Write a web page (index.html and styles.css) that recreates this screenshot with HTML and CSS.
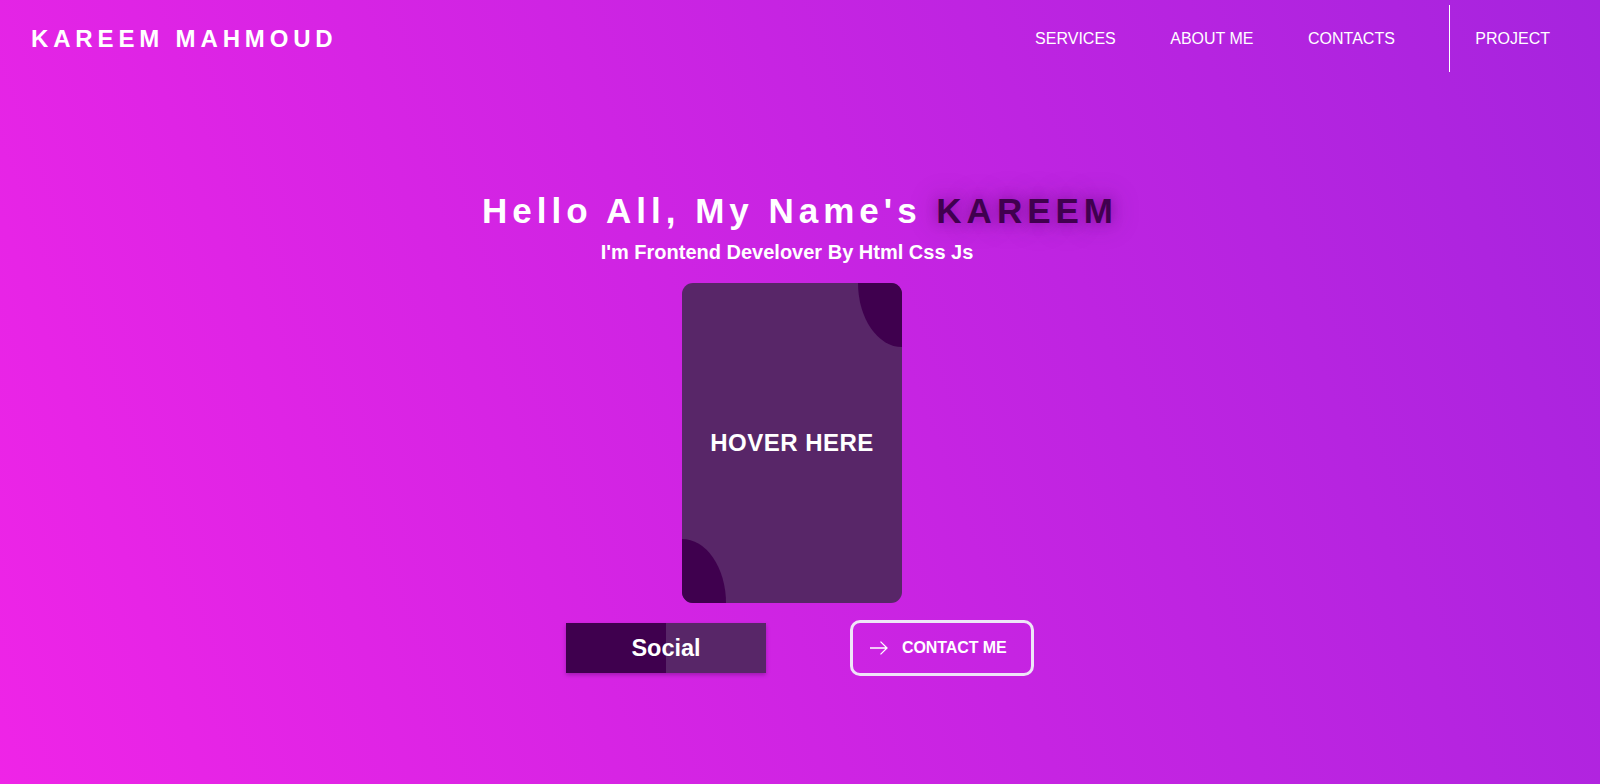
FILE: index.html
```html
<!DOCTYPE html>
<html lang="en">
<head>
<meta charset="utf-8">
<title>Kareem Mahmoud</title>
<link rel="stylesheet" href="styles.css">
</head>
<body>
<header class="header">
  <div class="logo">KAREEM MAHMOUD</div>
  <nav class="nav">
    <a class="nav-link" href="#">SERVICES</a>
    <a class="nav-link" href="#">ABOUT ME</a>
    <a class="nav-link" href="#">CONTACTS</a>
    <a class="nav-link nav-project" href="#">PROJECT</a>
  </nav>
</header>
<main class="hero">
  <h1 class="title">Hello All, My Name's <span class="name">KAREEM</span></h1>
  <p class="subtitle">I'm Frontend Develover By Html Css Js</p>
  <div class="card">
    <span class="card-blob card-blob-top"></span>
    <span class="card-text">HOVER HERE</span>
    <span class="card-blob card-blob-bottom"></span>
  </div>
  <div class="actions">
    <a class="btn-social" href="#">Social</a>
    <a class="btn-contact" href="#">
      <svg class="arrow" width="18" height="14" viewBox="0 0 18 14" aria-hidden="true">
        <path d="M0 7 H17 M10.5 0.6 L17 7 L10.5 13.4" fill="none" stroke="#fff" stroke-width="1.3"/>
      </svg>
      <span>CONTACT ME</span>
    </a>
  </div>
</main>
</body>
</html>
```

FILE: styles.css
```css
* { box-sizing: border-box; }

html, body {
  margin: 0;
  height: 100%;
}

body {
  font-family: "Liberation Sans", Arial, sans-serif;
  color: #fff;
  background: linear-gradient(70deg, #ef24e7 0%, #a624de 100%);
  overflow: hidden;
}

a { color: #fff; text-decoration: none; }

.header {
  height: 77px;
  display: flex;
  align-items: center;
  justify-content: space-between;
  padding: 5px 0 5px 31px;
}

.logo {
  font-size: 24px;
  font-weight: bold;
  letter-spacing: 4.85px;
}

.nav {
  display: flex;
  align-items: center;
  gap: 54.5px;
  height: 67px;
}

.nav-link {
  font-size: 16px;
  line-height: 67px;
}

.nav-project {
  border-left: 1px solid #fff;
  padding-left: 25px;
  padding-right: 50px;
}

.hero {
  display: flex;
  flex-direction: column;
  align-items: center;
  padding-top: 113px;
}

.title {
  margin: 0;
  font-size: 35px;
  line-height: 42px;
  font-weight: bold;
  letter-spacing: 5px;
}

.name {
  color: #40004f;
  text-shadow: 0 0 12px rgba(70, 0, 90, 0.4), 0 0 28px rgba(70, 0, 90, 0.4);
}

.subtitle {
  margin: 8px 26px 0 0;
  font-size: 20px;
  line-height: 24px;
  font-weight: bold;
}

.card {
  position: relative;
  margin: 19px 16px 0 0;
  width: 220px;
  height: 320px;
  background: #582668;
  border-radius: 11px;
  overflow: hidden;
  display: flex;
  align-items: center;
  justify-content: center;
}

.card-text {
  font-size: 24px;
  font-weight: bold;
  letter-spacing: 0.5px;
}

.card-blob {
  position: absolute;
  width: 20%;
  height: 20%;
  background: #3f004e;
}

.card-blob-top {
  top: 0;
  right: 0;
  border-bottom-left-radius: 100%;
}

.card-blob-bottom {
  bottom: 0;
  left: 0;
  border-top-right-radius: 100%;
}

.actions {
  margin-top: 17px;
  display: flex;
  align-items: center;
  gap: 84px;
}

.btn-social {
  width: 200px;
  height: 50px;
  display: flex;
  align-items: center;
  justify-content: center;
  background: linear-gradient(to right, #3f004e 50%, #582668 50%);
  font-size: 23.5px;
  font-weight: bold;
  box-shadow: 0 2px 4px rgba(40, 0, 60, 0.3);
}

.btn-contact {
  width: 184px;
  height: 56px;
  display: flex;
  align-items: center;
  gap: 14px;
  padding-left: 17px;
  border: 3px solid rgba(240, 240, 248, 0.95);
  border-radius: 10px;
  font-size: 16px;
  letter-spacing: -0.1px;
  font-weight: bold;
}

.arrow { display: block; flex: none; }
```
